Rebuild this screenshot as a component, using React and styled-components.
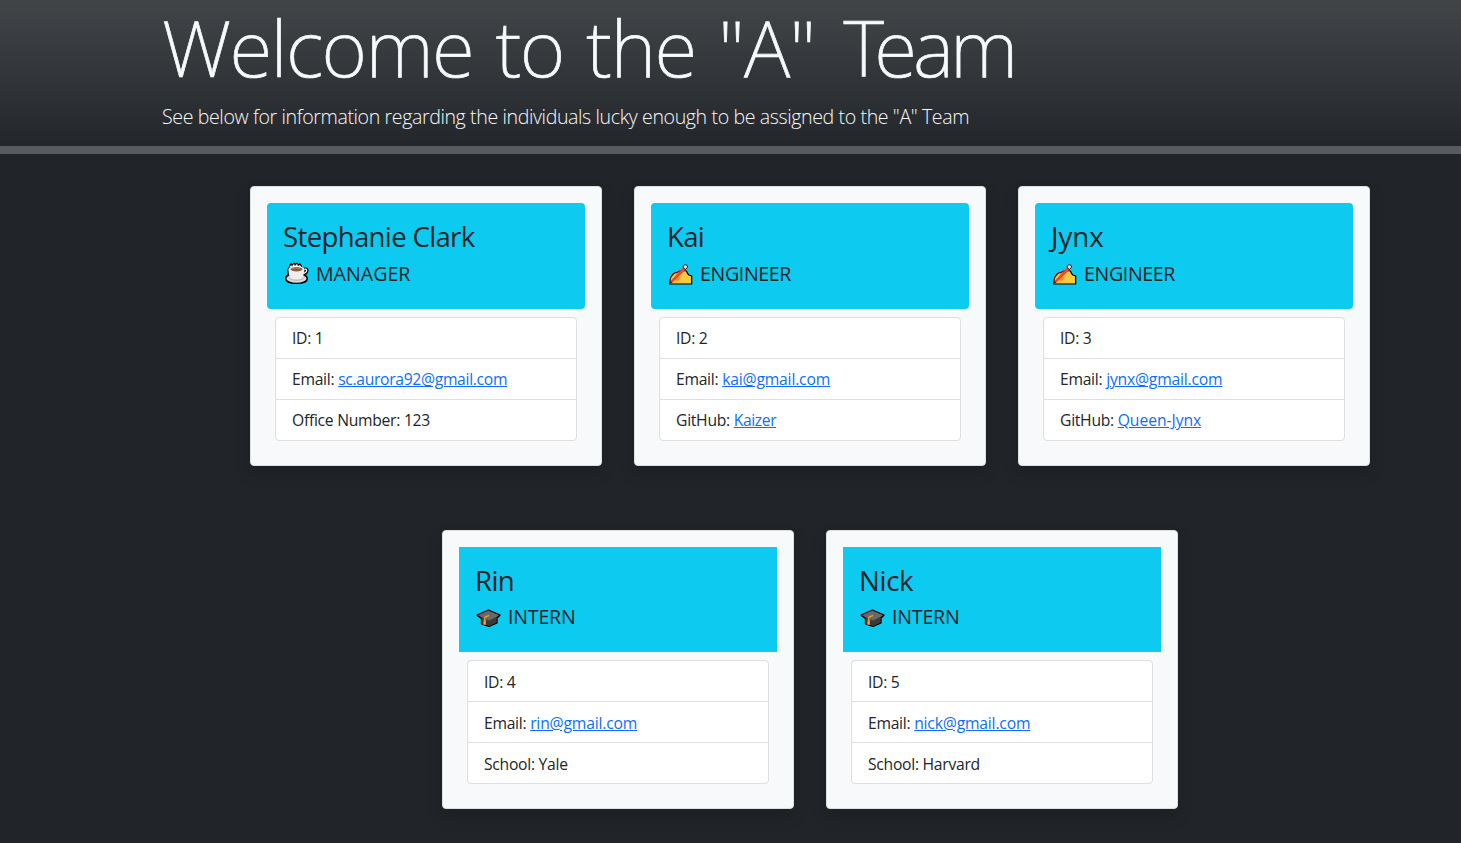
import React from 'react';
import styled, { createGlobalStyle } from 'styled-components';

const GlobalStyle = createGlobalStyle`
  *, *::before, *::after { box-sizing: border-box; }
  body {
    margin: 0;
    background: #212529;
    color: #212529;
    font-family: "Segoe UI", "Open Sans", "Noto Sans", sans-serif;
    font-size: 15.7px;
    line-height: 24px;
  }
`;

const Page = styled.div`
  display: flow-root;
`;

const Hero = styled.header`
  height: 154px;
  padding-left: 162px;
  border-bottom: 8px solid #575b5f;
  background: linear-gradient(180deg, #424548, #212529) border-box;
  color: #f8f9fa;
`;

const Title = styled.h1`
  margin: 0 0 9px;
  font-family: "Noto Sans", "Open Sans", sans-serif;
  font-size: 78.4px;
  font-weight: 200;
  font-kerning: none;
  line-height: 93px;
  letter-spacing: -1.6px;
  word-spacing: 3.8px;
  white-space: nowrap;
  -webkit-text-stroke: 0.7px currentColor;
`;

const TitleWord = styled.span`
  letter-spacing: ${(p) => p.$tracking}px;
  font-kerning: normal;
`;

const Lead = styled.p`
  margin: 0;
  font-size: 19.6px;
  font-weight: 300;
  line-height: 30px;
  letter-spacing: -0.395px;
  white-space: nowrap;
`;

const Team = styled.main`
  display: flex;
  flex-wrap: wrap;
  justify-content: center;
  padding: 0 0 0 159px;
`;

const Card = styled.article`
  width: 352px;
  margin: 32px 16px;
  padding: 16px;
  border: 1px solid #dfe0e1;
  border-radius: 4px;
  background: #f8f9fa;
  box-shadow: 0 8px 16px rgba(0, 0, 0, 0.15);
`;

const CardHeader = styled.header`
  padding: 16px;
  border-radius: ${(p) => (p.$square ? '0' : '4px')};
  background: #0dcaf0;
`;

const Name = styled.h2`
  margin: 0 0 6.4px;
  font-size: 27.6px;
  font-weight: 400;
  line-height: 35.2px;
  letter-spacing: ${(p) => p.$tracking}px;
`;

const Role = styled.h3`
  display: flex;
  align-items: center;
  gap: 7px;
  margin: 0 0 5.1px;
  font-size: 19.6px;
  font-weight: 400;
  line-height: 26.9px;
  letter-spacing: ${(p) => p.$tracking}px;
`;

const RoleIcon = styled.svg`
  flex: none;
  width: 26px;
  height: 24px;
`;

const Details = styled.ul`
  margin: 8px;
  padding: 0;
  list-style: none;
  border: 1px solid #dfdfdf;
  border-radius: 4px;
  background: #fff;
`;

const Detail = styled.li`
  padding: 8.6px 16px 7.4px;
  letter-spacing: -0.28px;
  & + & { border-top: 1px solid #dfdfdf; }
`;

const Link = styled.a`
  color: #0d6efd;
  letter-spacing: ${(p) => p.$tracking}px;
  text-decoration: underline;
`;

function Coffee() {
  return (
    <RoleIcon viewBox="0 0 26 24">
      <path d="M6 5 6.500 2.500 8 1l1.500 1L11 .5l1.500 1L14 .5l1.500 1.500L17 1l1.500 2 1 2.500H23q2.500 0 2.500 3 0 3-2.500 4.500 2 1 2 3.500 0 5.500-11.500 5.500T2 16.500q0-2.500 2.500-4.500Q3.500 7 6 5z" fill="#000" />
      <ellipse cx="13.500" cy="16.500" rx="10" ry="4.300" fill="#d9d7da" />
      <path d="M5.500 8q0 7 4 9.500h7.500q4-2.500 4.500-9.500z" fill="#efedef" />
      <path d="M6.500 5.500 8 3l1 1 2-2 1 1.500L14 2l1.500 2L17 3l2 3z" fill="#fff" />
      <ellipse cx="13.500" cy="7.200" rx="8" ry="3.200" fill="#f3f0f0" />
      <path d="M9 3v1.500M12 2.500V4M15 3v1" stroke="#333" strokeWidth=".7" />
      <ellipse cx="13.500" cy="7.300" rx="6" ry="2.200" fill="#8b5943" />
      <path d="M9 6.500q4-1.500 8 0" fill="none" stroke="#bc9b89" strokeWidth=".8" />
      <path d="M21.500 7.200H23q2 2.500-2.300 4.300" fill="none" stroke="#fff" strokeWidth="1.300" />
      <path d="M6.500 16.500q7 3.500 14 0" fill="none" stroke="#aaa9ab" strokeWidth=".8" />
    </RoleIcon>
  );
}

function Writing() {
  return (
    <RoleIcon viewBox="0 0 26 24">
      <path d="M2.500 22 3.500 16Q6 10.500 10 10.300l4.500-1.800 5 .5 1 2.500 1.500 1.500 2.700 1V22z" fill="#ffc83d" stroke="#000" strokeWidth="1.200" strokeLinejoin="round" />
      <path d="M6.500 18 8 14.500l4 .5 2 1-3.500 3z" fill="#dc9b24" />
      <path d="M2.500 21.500 3.500 19 16.500 5 19 7.200 5.500 20.500z" fill="#f4432c" />
      <path d="M15.800 5 17.800 2.500q2.500 0 3 2.500L18.500 7.500z" fill="#e9dcdc" stroke="#000" strokeWidth=".8" />
      <path d="M2 22.300 3.300 19l2 1.300z" fill="#32120c" />
    </RoleIcon>
  );
}

function Graduate() {
  return (
    <RoleIcon viewBox="0 0 26 24">
      <path d="M2 9.200 13.500 4 25 9.200 22 12v5l-8 3.500-7.500-2.500v-5.500z" fill="#4b4a4b" stroke="#000" strokeWidth="1.300" strokeLinejoin="round" />
      <path d="M3 9.300 13.500 4.800 24 9.300l-10 5z" fill="#69686a" />
      <path d="M7 12.500l7 2.700 7.500-3.700v5L14 19.800l-7-2.500z" fill="#3a393a" />
      <path d="M14 9.300 9.700 11.500V15" fill="none" stroke="#eda32b" strokeWidth="1.300" />
      <path d="M8.700 14h2l.3 5-2.800-.5z" fill="#eda32b" />
    </RoleIcon>
  );
}

const roles = {
  manager: { label: 'MANAGER', Icon: Coffee, tracking: 0 },
  engineer: { label: 'ENGINEER', Icon: Writing, tracking: -0.36 },
  intern: { label: 'INTERN', Icon: Graduate, tracking: -0.2 },
};

const members = [
  { id: 1, name: 'Stephanie Clark', tracking: -0.67, role: 'manager', email: 'sc.aurora92@gmail.com', mailTracking: -0.32, label: 'Office Number', value: '123' },
  { id: 2, name: 'Kai', tracking: -0.7, role: 'engineer', email: 'kai@gmail.com', mailTracking: -0.18, label: 'GitHub', link: 'Kaizer', linkTracking: -0.4 },
  { id: 3, name: 'Jynx', tracking: 0, role: 'engineer', email: 'jynx@gmail.com', mailTracking: -0.2, label: 'GitHub', link: 'Queen-Jynx', linkTracking: -0.05 },
  { id: 4, name: 'Rin', tracking: -0.6, role: 'intern', email: 'rin@gmail.com', mailTracking: -0.18, label: 'School', value: 'Yale' },
  { id: 5, name: 'Nick', tracking: -0.3, role: 'intern', email: 'nick@gmail.com', mailTracking: -0.18, label: 'School', value: 'Harvard' },
];

function MemberCard({ member }) {
  const { label, Icon, tracking } = roles[member.role];
  return (
    <Card>
      <CardHeader $square={member.role === 'intern'}>
        <Name $tracking={member.tracking}>{member.name}</Name>
        <Role $tracking={tracking}><Icon />{label}</Role>
      </CardHeader>
      <Details>
        <Detail>ID: {member.id}</Detail>
        <Detail>
          Email: <Link href={`mailto:${member.email}`} $tracking={member.mailTracking}>{member.email}</Link>
        </Detail>
        <Detail>
          {member.label}:{' '}
          {member.link
            ? <Link href={`#${member.link}`} $tracking={member.linkTracking}>{member.link}</Link>
            : member.value}
        </Detail>
      </Details>
    </Card>
  );
}

export default function App() {
  return (
    <Page>
      <GlobalStyle />
      <Hero>
        <Title>
          Welcome to the <TitleWord $tracking={4.8}>"A"</TitleWord> <TitleWord $tracking={-4}>Team</TitleWord>
        </Title>
        <Lead>See below for information regarding the individuals lucky enough to be assigned to the "A" Team</Lead>
      </Hero>
      <Team>
        {members.map((m) => <MemberCard key={m.id} member={m} />)}
      </Team>
    </Page>
  );
}
